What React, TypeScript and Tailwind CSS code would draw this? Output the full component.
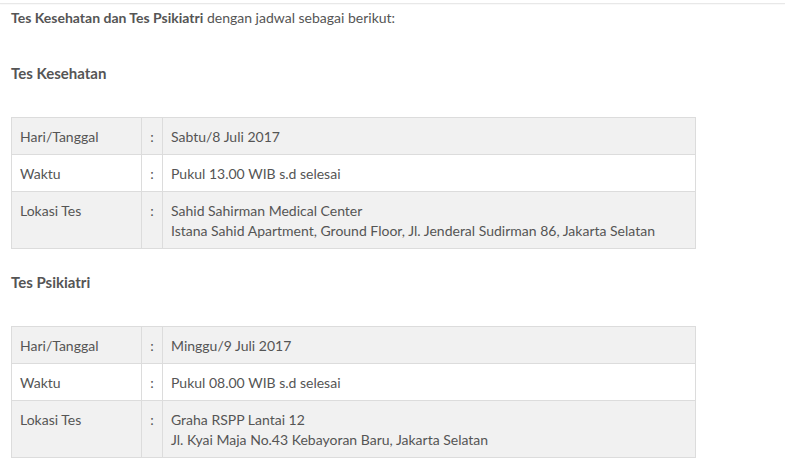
import React from "react";

type Row = { label: string; value: string[] };

const t1: Row[] = [
  { label: "Hari/Tanggal", value: ["Sabtu/8 Juli 2017"] },
  { label: "Waktu", value: ["Pukul 13.00 WIB s.d selesai"] },
  {
    label: "Lokasi Tes",
    value: [
      "Sahid Sahirman Medical Center",
      "Istana Sahid Apartment, Ground Floor, Jl. Jenderal Sudirman 86, Jakarta Selatan",
    ],
  },
];

const t2: Row[] = [
  { label: "Hari/Tanggal", value: ["Minggu/9 Juli 2017"] },
  { label: "Waktu", value: ["Pukul 08.00 WIB s.d selesai"] },
  {
    label: "Lokasi Tes",
    value: ["Graha RSPP Lantai 12", "Jl. Kyai Maja No.43 Kebayoran Baru, Jakarta Selatan"],
  },
];

function Table({ rows }: { rows: Row[] }) {
  return (
    <table className="border-collapse table-fixed w-[684px] text-[14px] leading-[20px]">
      <colgroup>
        <col className="w-[130px]" />
        <col className="w-[21px]" />
        <col className="w-[533px]" />
      </colgroup>
      <tbody>
        {rows.map((r, i) => (
          <tr key={i} className={i % 2 === 0 ? "bg-[#f1f1f1]" : "bg-white"}>
            <td className="border border-[#dcdcdc] px-2 pt-[9px] pb-[7px] align-top">{r.label}</td>
            <td className="border border-[#dcdcdc] pt-[9px] pb-[7px] text-center align-top">:</td>
            <td className="border border-[#dcdcdc] px-2 pt-[9px] pb-[7px] align-top">
              {r.value.map((v, j) => (
                <div key={j}>{v}</div>
              ))}
            </td>
          </tr>
        ))}
      </tbody>
    </table>
  );
}

export default function App() {
  return (
    <div
      className="w-[785px] h-[476px] bg-white text-[#555] overflow-hidden"
      style={{ fontFamily: "Lato, 'Open Sans', sans-serif" }}
    >
      <div className="h-[3px]" />
      <div className="border-t border-[#e8e8e8] shadow-[0_1px_1px_rgba(0,0,0,0.03)]" />
      <div className="px-[11px] pt-[4px]">
        <p className="text-[14px] leading-[20px]">
          <span className="font-bold">Tes Kesehatan dan Tes Psikiatri</span> dengan jadwal sebagai berikut:
        </p>
        <h3 className="mt-[35px] text-[15px] leading-[20px] font-bold">Tes Kesehatan</h3>
        <div className="mt-[34px]">
          <Table rows={t1} />
        </div>
        <h3 className="mt-[23px] text-[15px] leading-[20px] font-bold">Tes Psikiatri</h3>
        <div className="mt-[34px]">
          <Table rows={t2} />
        </div>
      </div>
    </div>
  );
}
